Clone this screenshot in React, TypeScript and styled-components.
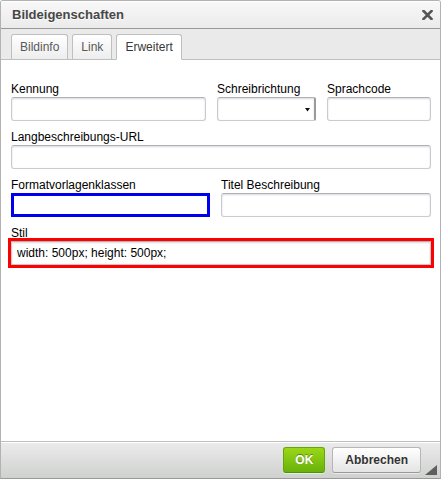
import React from 'react';
import styled, { createGlobalStyle } from 'styled-components';

const GlobalStyle = createGlobalStyle`
  html, body {
    margin: 0;
    padding: 0;
    background: #fff;
  }
  body {
    font-family: "Liberation Sans", Arial, Helvetica, sans-serif;
    font-size: 12px;
    color: #000;
  }
  * {
    box-sizing: border-box;
  }
`;

const Dialog = styled.div`
  width: 441px;
  height: 479px;
  display: flex;
  flex-direction: column;
  background: #eaeaea;
  border: 1px solid #b2b2b2;
  border-bottom-color: #999;
  border-radius: 3px 3px 0 0;
  overflow: hidden;
`;

const TitleBar = styled.div`
  height: 28px;
  flex: none;
  display: flex;
  align-items: center;
  justify-content: space-between;
  padding: 0 7px 0 11px;
  border-bottom: 1px solid #999;
  background: linear-gradient(to bottom, #f8f8f8, #ebebeb);
  box-shadow: 0 1px 0 #fff inset;
  color: #474747;
  font-size: 13px;
  font-weight: bold;
  line-height: 15px;
  text-shadow: 0 1px 0 rgba(255, 255, 255, 0.75);
`;

const CloseButton = styled.span`
  display: flex;
  width: 11px;
  height: 10px;
  margin-top: 1px;
  cursor: pointer;
`;

const TabBar = styled.div`
  height: 31px;
  flex: none;
  display: flex;
  align-items: flex-end;
  gap: 4px;
  padding: 5px 10px 0;
  border-bottom: 1px solid #bfbfbf;
  background: #eaeaea;
`;

const Tab = styled.a<{ $selected?: boolean }>`
  display: block;
  height: ${p => (p.$selected ? '26px' : '25px')};
  margin-bottom: ${p => (p.$selected ? '-1px' : '0')};
  padding: 4px 8px;
  line-height: 16px;
  border: 1px solid #bfbfbf;
  border-bottom: ${p => (p.$selected ? '1px solid #fff' : 'none')};
  border-radius: 3px 3px 0 0;
  background: ${p => (p.$selected ? '#fff' : 'linear-gradient(to bottom, #fff, #ededed)')};
  color: ${p => (p.$selected ? '#383838' : '#595959')};
  cursor: pointer;
`;

const Contents = styled.div`
  flex: 1;
  background: #fff;
  padding: 21px 9px 0 10px;
  display: flex;
  flex-direction: column;
  gap: 8px;
`;

const Row = styled.div<{ $columns: string }>`
  display: grid;
  grid-template-columns: ${p => p.$columns};
  column-gap: 11px;
`;

const Field = styled.div`
  display: flex;
  flex-direction: column;
  min-width: 0;
`;

const Label = styled.label`
  display: block;
  line-height: 16px;
  color: #000;
  white-space: nowrap;
`;

const TextInput = styled.input<{ $frame?: 'blue' | 'red' }>`
  width: 100%;
  height: 24px;
  margin: 0;
  padding: 4px 5px;
  font-family: inherit;
  font-size: 12px;
  color: #000;
  background: #fff;
  border: ${p => (p.$frame === 'blue' ? '3px solid #0000f0' : '1px solid #c9cccf')};
  border-top-color: ${p => (p.$frame === 'blue' ? '#0000f0' : '#aeb3b9')};
  border-radius: ${p => (p.$frame ? '0' : '3px')};
  box-shadow: ${p => (p.$frame === 'blue' ? 'none' : 'inset 0 1px 2px rgba(0, 0, 0, 0.15)')};
  outline: ${p => (p.$frame === 'red' ? '3px solid #f00' : 'none')};
  outline-offset: 0;
`;

const SelectBox = styled.div`
  height: 24px;
  display: flex;
  align-items: center;
  justify-content: flex-end;
  padding-right: 2px;
  background: #fff;
  border: 1px solid #c9cccf;
  border-top-color: #aeb3b9;
  border-right: 2px solid #9a9a9a;
  border-radius: 3px 2px 2px 3px;
  box-shadow: inset 0 1px 2px rgba(0, 0, 0, 0.15);
`;

const Footer = styled.div`
  height: 37px;
  flex: none;
  display: flex;
  justify-content: flex-end;
  align-items: flex-start;
  gap: 7px;
  padding: 5px 3px 0 0;
  border-top: 1px solid #bfbfbf;
  background: linear-gradient(to bottom, #ebebeb, #cfd1cf);
  box-shadow: 0 1px 0 #fff inset;
`;

const Button = styled.a<{ $primary?: boolean }>`
  display: block;
  height: 26px;
  padding: 3px ${p => (p.$primary ? '11px' : '12px')};
  line-height: 18px;
  font-weight: bold;
  border-radius: 3px;
  cursor: pointer;
  border: 1px solid ${p => (p.$primary ? '#62a60a' : '#b6b6b6')};
  border-bottom-color: ${p => (p.$primary ? '#4d9200' : '#999')};
  background: ${p =>
    p.$primary
      ? 'linear-gradient(to bottom, #9ad717, #69b10b)'
      : 'linear-gradient(to bottom, #fff, #e4e4e4)'};
  color: ${p => (p.$primary ? '#fff' : '#333')};
  text-shadow: ${p => (p.$primary ? '0 -1px 0 #55830c' : '0 1px 0 rgba(255, 255, 255, 0.5)')};
  box-shadow: 0 1px 0 rgba(255, 255, 255, 0.5);
`;

const Grip = styled.span`
  display: flex;
  align-self: flex-end;
  margin: 0 0 3px -3px;
`;

const CloseIcon = () => (
  <svg width="11" height="10" viewBox="0 0 11 10">
    <path d="M1.5 1 L9.5 9 M9.5 1 L1.5 9" stroke="#555" strokeWidth="2.6" strokeLinecap="square" />
  </svg>
);

const ArrowIcon = () => (
  <svg width="7" height="4" viewBox="0 0 7 4" style={{ marginRight: 1, marginTop: 1 }}>
    <path d="M1 0 H6 L3.5 3.5 Z" fill="#111" />
  </svg>
);

const GripIcon = () => (
  <svg width="12" height="10" viewBox="0 0 12 10">
    <path d="M12 0 V10 H0 Z" fill="#5e5e5e" />
  </svg>
);

export default () => {
  const tabs = ['Bildinfo', 'Link', 'Erweitert'];
  const selectedTab = 2;

  return <>
    <GlobalStyle />
    <Dialog>
      <TitleBar>
        <span>Bildeigenschaften</span>
        <CloseButton title="Schließen"><CloseIcon /></CloseButton>
      </TitleBar>

      <TabBar>
        {tabs.map((t, i) => <Tab key={t} $selected={i === selectedTab}>{t}</Tab>)}
      </TabBar>

      <Contents>
        <Row $columns="195px 99px 1fr">
          <Field>
            <Label>Kennung</Label>
            <TextInput />
          </Field>
          <Field>
            <Label>Schreibrichtung</Label>
            <SelectBox><ArrowIcon /></SelectBox>
          </Field>
          <Field>
            <Label>Sprachcode</Label>
            <TextInput />
          </Field>
        </Row>

        <Row $columns="1fr">
          <Field>
            <Label>Langbeschreibungs-URL</Label>
            <TextInput />
          </Field>
        </Row>

        <Row $columns="199px 1fr">
          <Field>
            <Label>Formatvorlagenklassen</Label>
            <TextInput $frame="blue" />
          </Field>
          <Field>
            <Label>Titel Beschreibung</Label>
            <TextInput />
          </Field>
        </Row>

        <Row $columns="1fr">
          <Field>
            <Label>Stil</Label>
            <TextInput $frame="red" defaultValue="width: 500px; height: 500px;" />
          </Field>
        </Row>
      </Contents>

      <Footer>
        <Button $primary>OK</Button>
        <Button>Abbrechen</Button>
        <Grip><GripIcon /></Grip>
      </Footer>
    </Dialog>
  </>;
};
